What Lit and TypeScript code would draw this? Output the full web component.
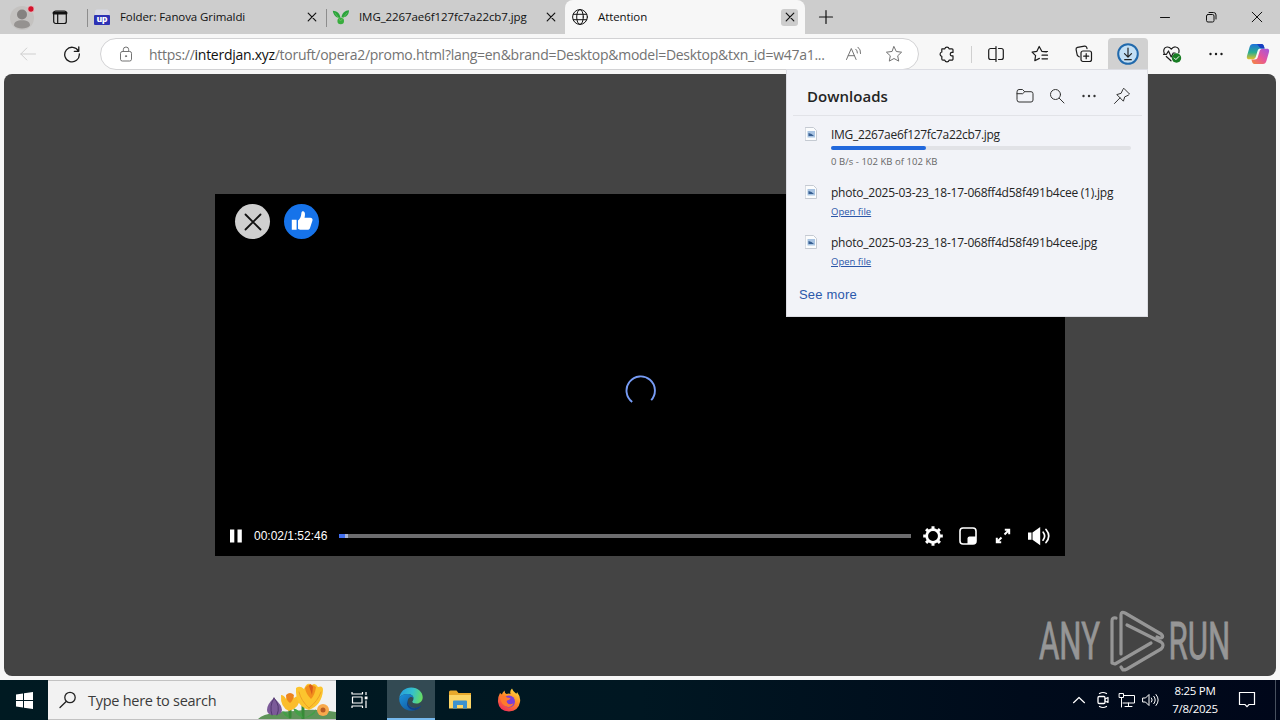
import { LitElement, html, svg, css, nothing } from 'lit';
import type { SVGTemplateResult } from 'lit';
import { customElement, property } from 'lit/decorators.js';
import { classMap } from 'lit/directives/class-map.js';

/** Wraps drawing content in an svg of the given size. */
const icon = (w: number, h: number, body: SVGTemplateResult) => html`
  <svg width=${w} height=${h} viewBox="0 0 ${w} ${h}" fill="none" stroke="currentColor"
    stroke-linecap="round" stroke-linejoin="round">${body}</svg>`;

const icons = {
  profile: icon(26, 26, svg`
    <circle cx="13" cy="14" r="12" fill="#c4c2c0" stroke="none"/>
    <circle cx="13" cy="10.5" r="5" fill="#858280" stroke="none"/>
    <path d="M5 21.5c0-3.6 3-5.2 8-5.2s8 1.6 8 5.2c-1.8 2.3-4.7 3-8 3s-6.2-.7-8-3z" fill="#959290" stroke="none"/>
    <circle cx="22" cy="5" r="3.3" fill="#d3122b" stroke="#e9d5d6" stroke-width=".8"/>`),
  workspaces: icon(16, 16, svg`
    <rect x="1.7" y="2" width="12.6" height="12.5" rx="2" stroke-width="1.2"/>
    <path d="M2 4h12" stroke-width="3"/><path d="M5.7 5v9" stroke-width="1.2"/>`),
  close: icon(10, 10, svg`<path d="M1.2 1.2l7.6 7.6M8.8 1.2L1.2 8.8" stroke-width="1.2"/>`),
  plus: icon(16, 16, svg`<path d="M8 1.5v13M1.5 8h13" stroke-width="1.2"/>`),
  minimize: icon(12, 12, svg`<path d="M1.5 6.5h9"/>`),
  restore: icon(12, 12, svg`
    <rect x="1.5" y="3.5" width="7.5" height="7.5" rx="1.5"/>
    <path d="M4 1.5h4.5a2.5 2.5 0 0 1 2.5 2.5V8"/>`),
  windowClose: icon(12, 12, svg`<path d="M1.2 1.2l9.6 9.6M10.8 1.2l-9.6 9.6"/>`),
  globe: icon(18, 18, svg`
    <circle cx="9" cy="9" r="7.4"/><ellipse cx="9" cy="9" rx="3.3" ry="7.4"/>
    <path d="M2.4 6.3h13.2M2.4 11.7h13.2"/>`),
  upload: icon(18, 18, svg`
    <path d="M2 3.5q0-2 2-2h10.5l2 2V8H2z" fill="#d8d9e4" stroke="none"/>
    <rect x="1" y="7" width="16" height="10" rx="1" fill="#2d32b4" stroke="none"/>
    <text x="9" y="14" text-anchor="middle" font-family="Roboto" font-weight="900" font-size="9.5" fill="#fff" stroke="none">up</text>`),
  sprout: icon(18, 18, svg`
    <path d="M8.500 10C8 5 4.500 3 .8 2.800 1.500 7.500 4 10 8.500 10zM9.500 9.500C10 5 13 2.500 17 2.300 17 7 14 9.700 9.500 9.500z" fill="#2aa23c" stroke="none"/>
    <circle cx="8.7" cy="13" r="3.3" fill="#39ad3e" stroke="none"/><path d="M3 5l5.500 8L15 5" stroke="#65c75a" stroke-width=".8"/>`),
  back: icon(18, 16, svg`<path d="M16.500 8H1.800M7.800 2L1.800 8l6 6"/>`),
  reload: icon(18, 18, svg`<path d="M15.500 6.200A7.300 7.300 0 1 0 16.300 9M15.800 1.800v4.500h-4.500" stroke-width="1.3"/>`),
  lock: icon(14, 16, svg`
    <rect x="1.5" y="5.5" width="11" height="9.5" rx="1.8"/>
    <path d="M4.300 5.500V3.700a2.700 2.700 0 0 1 5.400 0v1.800"/><circle cx="7" cy="10.2" r=".6" fill="currentColor"/>`),
  readAloud: icon(18, 16, svg`
    <path d="M1.500 13.500L6.300 2.500l4.800 11M3.200 9.700h6.200M10.800 3.200q1.700 1.300 1.600 3.800M13 1.200q3 2.200 2.600 6.300"/>`),
  star: icon(18, 18, svg`<path d="M9 1.700l2.300 4.800 5.300.7-3.900 3.600 1 5.300L9 13.500l-4.700 2.600 1-5.300L1.400 7.200l5.300-.7z"/>`),
  puzzle: icon(18, 18, svg`
    <path d="M4 3.800h2.800a2.200 2.200 0 0 1 4.300 0H14a1 1 0 0 1 1 1v2.600h-1.400a1.800 1.800 0 0 0 0 3.500H15V14a1.200 1.200 0 0 1-1.200 1.200h-2.700a2.200 2.200 0 0 1-4.300 0H5a1.200 1.200 0 0 1-1.200-1.200v-2.700a2.200 2.200 0 0 1 0-4.300V4z" stroke-width="1.2"/>`),
  split: icon(18, 18, svg`
    <path d="M6.500 3.500H3.700a2 2 0 0 0-2 2v7a2 2 0 0 0 2 2h2.800M11.500 3.500h2.800a2 2 0 0 1 2 2v7a2 2 0 0 1-2 2h-2.800M9 1.500v15M6.500 3.500H9M6.500 14.500H9" stroke-width="1.2"/>`),
  favorites: icon(18, 18, svg`
    <path d="M15.500 6.800l-4.700-.5L8.200 1.500 5.900 6.300l-4.800.8 3.500 3.600-.8 5 4.600-2.300M11.300 6.500h5.200M11 10.200h5.500M11 13.800h5.500" stroke-width="1.2"/>`),
  collections: icon(18, 18, svg`
    <rect x="6" y="6" width="10.5" height="10.5" rx="2" stroke-width="1.2"/><path d="M11.200 8.700v5M8.700 11.200h5" stroke-width="1.2"/>
    <path d="M4.200 11.800L3 11a2 2 0 0 1-.8-1L1.100 4.700A2 2 0 0 1 2.500 2.400l7-1.300a2 2 0 0 1 2.200 1.300l.3 1.300" stroke-width="1.2"/>`),
  download: icon(24, 24, svg`
    <circle cx="12" cy="12" r="9.8" fill="#c3dff4" stroke="#2069ac" stroke-width="2"/>
    <path d="M12 6v9M8.500 11.700L12 15.200l3.500-3.500M8.700 17.700h6.600" stroke="#222" stroke-width="1.2"/>`),
  health: icon(20, 18, svg`
    <path d="M2.200 8.300C1 5.500 2 2.300 5 2c2-.2 3.400 1 4.300 2.200C10.200 3 12 1.700 13.700 2c3 .4 3.900 3.300 3.100 5.700M1.500 9.300h3L6.500 6l2.700 6 2-4h2M4.300 11.500l4.700 4.300" stroke-width="1.2"/>
    <circle cx="14.5" cy="13" r="4.7" fill="#187d24" stroke="none"/><path d="M12.300 13l1.600 1.600 2.900-3" stroke="#fff"/>`),
  more: icon(16, 4, svg`<g fill="currentColor" stroke="none"><circle cx="2.5" cy="2" r="1.2"/><circle cx="8" cy="2" r="1.2"/><circle cx="13.5" cy="2" r="1.2"/></g>`),
  copilot: icon(24, 22, svg`
    <defs>
      <linearGradient id="a" x1="0" y1="0" x2="0" y2="1"><stop stop-color="#1d71dc"/><stop offset=".55" stop-color="#29ad90"/><stop offset="1" stop-color="#e3c12b"/></linearGradient>
      <linearGradient id="b" x1="1" y1="0" x2="0" y2="1"><stop stop-color="#a056e0"/><stop offset=".5" stop-color="#e6549b"/><stop offset="1" stop-color="#f58a3b"/></linearGradient>
    </defs>
    <g stroke="none">
      <path d="M7 1h8.500c1.600 0 2 1 2.500 2.500l.6 2h-4c-2 0-2.700 1.300-3.200 3l-1.500 5c-.6 1.700-1.500 2.700-3.300 2.700H3c-2.300 0-2.500-2-1.800-4L3.600 4C4.200 2.200 5.200 1 7 1z" fill="url(#a)"/>
      <path d="M17 21H8.500c-1.600 0-2-1-2.500-2.500l-.6-2h3.400c2 0 2.700-1.300 3.200-3l1.500-5c.6-1.700 1.500-2.700 3.300-2.700H21c2.300 0 2.500 2 1.800 4L20.400 18c-.6 1.800-1.600 3-3.400 3z" fill="url(#b)"/>
      <path d="M11 1h4.500c1.600 0 2 1 2.500 2.500l.6 2h-4z" fill="#173fc2"/>
    </g>`),
  folder: icon(18, 16, svg`
    <path d="M1 3.500a2 2 0 0 1 2-2h3.500l2.200 2.200H15a2 2 0 0 1 2 2V12a2 2 0 0 1-2 2H3a2 2 0 0 1-2-2zM1 5.700h5.700l2-2"/>`),
  search: icon(16, 16, svg`<circle cx="6.5" cy="6.5" r="5"/><path d="M10.300 10.300l4.700 4.700"/>`),
  pin: icon(18, 18, svg`
    <path d="M11 1.500l5.500 5.500-1.200 1.200-3.600 1.700-1.300 4.300-6.600-6.600 4.300-1.300L9.800 2.700zM7 10.900l-5.500 5.600"/>`),
  image: icon(12, 14, svg`
    <path d="M.5 .5h8l3 3v10H.5z" fill="#fbfcfd" stroke="#c5cad2"/>
    <rect x="2.5" y="4" width="7.5" height="6.5" fill="#a8c3e2" stroke="none"/><path d="M3.500 6l3 1L9 9H3.500z" fill="#365e91" stroke="none"/>`),
  bigClose: icon(18, 18, svg`<path d="M1.500 1.500l15 15M16.500 1.500l-15 15" stroke-width="1.8"/>`),
  thumb: icon(22, 22, svg`
    <path d="M.8 8.800h4.800v10H.8zM7 9.500c2-1.800 3-3.500 3.300-6.800.1-2 1-2.500 1.900-2.400 1.800.3 2.300 3 1.300 6.400h5.700c2 0 2.800 1.600 2.200 3l-2.300 7c-.5 1.500-1.200 2.100-2.700 2.100H10c-1.200 0-2-.3-3-1z" fill="#fff" stroke="none"/>`),
  spinner: icon(32, 32, svg`<path d="M7.200 27A14.200 14.200 0 1 1 26.200 25.200" stroke="#779cf5" stroke-width="1.9" stroke-linecap="butt"/>`),
  pause: icon(12, 14, svg`<path d="M0 .5h4.300v13H0zM7.500 .5h4.300v13H7.500z" fill="#fff" stroke="none"/>`),
  gear: icon(22, 22, svg`
    <circle cx="11" cy="11" r="6.3" stroke-width="2.7"/>
    <path d="M11 1.200v3M11 17.800v3M1.200 11h3M17.800 11h3M4.100 4.100l2 2M15.900 15.900l2 2M17.900 4.100l-2 2M6.100 15.900l-2 2" stroke-width="3" stroke-linecap="butt"/>`),
  pip: icon(18, 18, svg`
    <rect x="1" y="1" width="16" height="16" rx="3" stroke-width="1.6"/><path d="M8.500 17v-5.500a2 2 0 0 1 2-2H17V15l-2 2z" fill="#fff" stroke="none"/>`),
  expand: icon(16, 16, svg`
    <path d="M9.800 1.800h4.400v4.400M14 2L9.500 6.500M1.800 9.800v4.400h4.400M2 14l4.500-4.500" stroke-width="2" stroke-linecap="butt" stroke-linejoin="miter"/>`),
  volume: icon(24, 20, svg`
    <path d="M1 6.500h3.500v7.300H1zM5.500 6.500L13.200 1v18.200L5.500 13.800z" fill="#fff" stroke="none"/>
    <path d="M16.200 6.200q3 4-.2 8M19 3.500q5.500 6.500 0 13" stroke-width="1.7"/>`),
  windows: icon(17, 17, svg`<path d="M0 2.500l7-1V8H0zM8 1.300L17 0v8H8zM0 9h7v6.500l-7-1zM8 9h9v8l-9-1.300z" fill="#fff" stroke="none"/>`),
  taskSearch: icon(18, 18, svg`<circle cx="11" cy="6.5" r="5.2" stroke-width="1.3"/><path d="M7.200 10.500L1 16.500" stroke-width="1.3"/>`),
  flowers: icon(78, 38, svg`
    <g stroke="none">
      <path d="M0 38q5-5 17-6 10-2 20-2 20-3 41 1v7z" fill="#5e9459"/>
      <path d="M45 38V25M32 36V24" stroke="#378b38" stroke-width="3"/>
      <path d="M45 37q-8-3-10-10 8 2 10 10zM46 37q8-3 12-9-1 8-12 9zM31 37q-5-2-7-7 6 1 7 7z" fill="#43a047"/>
      <path d="M16 17q-7 6-7 12 0 5 7 5 8 0 8-5 0-5-8-12z" fill="#7c5a99"/><path d="M16 17q-5 8-2 17M16 17q7 8 3 17" stroke="#52386f" fill="none"/>
      <path d="M23 14q3 0 5 4 1-5 4-5 3 1 4 4 3-3 6-1 0 11-11 14-9-4-8-16z" fill="#fbbd2b"/>
      <path d="M28 14q4-4 8 0-1 6-4 8-4-3-4-8z" fill="#ed831d"/>
      <g transform="translate(-2)">
        <path d="M40 7q4-3 8 1 3-8 8-4 3-3 6 2 5-2 5 3-1 15-14 20-14-4-13-22z" fill="#fcc42e"/>
        <path d="M49 7q4-6 11-1-1 8-5 12-5-5-6-11z" fill="#f28e1c"/><path d="M53 5q1-4 4 1l-1 8z" fill="#d95d1b"/>
        <path d="M43 11q2 9 10 16M65 11q-3 9-12 16" stroke="#eea025" fill="none"/>
      </g>
      <circle cx="65" cy="29" r="6" fill="#f8a94c"/><circle cx="65" cy="29" r="2.5" fill="#b75c24"/>
    </g>`),
  taskView: icon(18, 18, svg`
    <path d="M1 1v2h10.500V1M1 17v-2h10.500v2M1.500 6h9.500v6H1.500zM15 1v3M15 9.500V17" stroke="#fff" stroke-width="1.2" stroke-linecap="butt"/><path d="M13.700 5.500h2.800v2.800h-2.800z" fill="#fff" stroke="none"/>`),
  edge: icon(24, 24, svg`
    <defs>
      <linearGradient id="e1" x1="0" x2="1" y1=".3" y2=".5"><stop stop-color="#249de0"/><stop offset=".55" stop-color="#35c1cb"/><stop offset="1" stop-color="#66dc62"/></linearGradient>
      <linearGradient id="e2" x1="0" x2="1" y2="1"><stop stop-color="#1a92dd"/><stop offset="1" stop-color="#114a8b"/></linearGradient>
    </defs>
    <g stroke="none">
      <path d="M.3 11C1 4.500 6 .4 12.200 .4 19 .4 23.700 5 23.700 10.200c0 4-3 6.300-6.400 6.300-2.700 0-4-.9-4-1.700 0-.6 1.200-1.200 1.200-3.300C14.500 8.700 12 7 8.800 7 4.800 7 1.500 8.500.3 11z" fill="url(#e1)"/>
      <path d="M.3 11C1.500 8.500 4.800 7 8.800 7c3.200 0 5.700 1.700 5.700 4.500-1-1.500-2.600-1.800-3.500-1.300-2 1-2.500 3-2.300 5.300.4 3.500 4.300 6.200 8.800 5.300 1.600-.3 3-1 4.500-2-2 3.200-5.600 5-9.800 5C5.200 23.800-.3 18 .3 11z" fill="url(#e2)"/>
      <path d="M8.800 13.500c-.9 5 4 8.800 8.700 7.300 1.600-.3 3-1 4.500-2-.7 1.500-2.500 3.200-4.500 4C11 24 6 19 8.800 13.500z" fill="#123f85"/>
    </g>`),
  explorer: icon(22, 20, svg`
    <g stroke="none">
      <path d="M0 2q0-1.500 1.500-1.500h6L9.500 3H22v15H0z" fill="#e8a92c"/><path d="M0 5h22v13.500H0z" fill="#fcd566"/>
      <path d="M4 18.500v-7q0-1 1-1h12q1 0 1 1v7h-4V15H8v3.500z" fill="#3c92cf"/>
    </g>`),
  firefox: icon(24, 24, svg`
    <defs><linearGradient id="f" x1=".8" y1="0" x2=".2" y2="1"><stop stop-color="#ffdf3e"/><stop offset=".45" stop-color="#ff8a27"/><stop offset="1" stop-color="#f0285c"/></linearGradient></defs>
    <g stroke="none">
      <path d="M3 5l2 1.500q.5-2 2.500-4 0 2.500 2 3.500Q12 5 13.500 6 12.500 3 15 .5q1 3 4 5Q20 6 20 4q4 5 3 10-1.500 9-11 9.500Q2 23 1 14 .7 9 3 5z" fill="url(#f)"/>
      <circle cx="12" cy="13.5" r="6" fill="#7a3fd8"/>
      <path d="M3 9q4-3 7 .5l3.500.5q-.5 2-3.500 2.500-1 2 1.500 3.500 3 1 5-1-1 4-5.500 4Q4 18 3 9z" fill="#ff7a2d"/>
    </g>`),
  chevron: icon(14, 8, svg`<path d="M1.500 6.700L7 1.500l5.500 5.200" stroke-width="1.2"/>`),
  meet: icon(12, 18, svg`
    <rect x="1" y="5.5" width="7" height="7" rx="1.2" stroke-width="1.3"/><path d="M8 8l3-1.500v5L8 10M2.500 2.500q3.500-2 7 0M2.500 15.500q3.500 2 7 0" stroke-width="1.2"/>`),
  network: icon(18, 16, svg`
    <path d="M6 3.500h10.500v7.500H5M10.500 11v3M7 14.500h7M1.500 1.500h4v4h-4zM3.500 5.500V15" stroke-linejoin="miter"/>`),
  sound: icon(18, 14, svg`
    <path d="M1 5h2.500L7 1.500v11L3.500 9H1zM9.500 5q1.500 2 0 4M11.800 3.300q3 3.700 0 7.400M14 1.500q4.500 5.500 0 11"/>`),
  notify: icon(18, 18, svg`<path d="M1.500 1.500h15v12H11L9 15.700 7 13.500H1.500z" stroke-width="1.2" stroke-linejoin="miter"/>`),
};

interface Tab {
  title: string;
  icon: unknown;
  active?: boolean;
}

interface Download {
  name: string;
  status?: string;
  progress?: number;
}

const TABS: Tab[] = [
  { title: 'Folder: Fanova Grimaldi', icon: icons.upload },
  { title: 'IMG_2267ae6f127fc7a22cb7.jpg', icon: icons.sprout },
  { title: 'Attention', icon: icons.globe, active: true },
];

const DOWNLOADS: Download[] = [
  { name: 'IMG_2267ae6f127fc7a22cb7.jpg', status: '0 B/s - 102 KB of 102 KB', progress: 31.7 },
  { name: 'photo_2025-03-23_18-17-068ff4d58f491b4cee (1).jpg' },
  { name: 'photo_2025-03-23_18-17-068ff4d58f491b4cee.jpg' },
];

/** Tab strip with the window buttons. */
@customElement('tab-strip')
export class TabStrip extends LitElement {
  @property({ attribute: false }) tabs: Tab[] = [];

  static styles = css`
    :host {
      display: flex;
      height: 34px;
      background: #cdcdcd;
      color: #111;
    }
    svg { display: block; flex: none; }
    .slot { display: flex; align-items: center; justify-content: center; }
    .profile { width: 44px; }
    .spaces { width: 32px; margin-right: 11px; }
    .tab {
      display: flex;
      align-items: center;
      width: 239px;
      box-sizing: border-box;
      padding: 0 6px;
      background: linear-gradient(#8d8d8d, #8d8d8d) 0 9px / 1px 18px no-repeat;
      font-size: 11.5px;
      letter-spacing: -0.09px;
      white-space: nowrap;
    }
    .tab.active {
      width: 240px;
      padding-right: 7px;
      border-radius: 8px 8px 0 0;
      background: #f7f7f7;
    }
    .title { flex: 1; margin-left: 9px; padding-bottom: 2px; }
    .close {
      display: flex;
      align-items: center;
      justify-content: center;
      width: 17px;
      height: 17px;
      border-radius: 3px;
    }
    .active .close { background: #cdcdcd; }
    .new { width: 42px; }
    .window { display: flex; margin-left: auto; }
    .window .slot { width: 46px; }
  `;

  render() {
    return html`
      <div class="slot profile">${icons.profile}</div>
      <div class="slot spaces">${icons.workspaces}</div>
      ${this.tabs.map((tab) => html`
        <div class=${classMap({ tab: true, active: !!tab.active })}>
          ${tab.icon}
          <span class="title">${tab.title}</span>
          <span class="close">${icons.close}</span>
        </div>
      `)}
      <div class="slot new">${icons.plus}</div>
      <div class="window">
        <div class="slot">${icons.minimize}</div>
        <div class="slot">${icons.restore}</div>
        <div class="slot">${icons.windowClose}</div>
      </div>
    `;
  }
}

/** Navigation buttons, address field and browser actions. */
@customElement('browser-toolbar')
export class BrowserToolbar extends LitElement {
  static styles = css`
    :host {
      display: flex;
      align-items: center;
      height: 40px;
      background: #f7f7f7;
      color: #1b1b1b;
    }
    svg { display: block; flex: none; }
    .slot { display: flex; flex: none; align-items: center; justify-content: center; width: 44px; }
    .back { width: 56px; color: #cfcfcf; }
    .reload { width: 32px; margin-right: 12px; }
    .address {
      display: flex;
      flex: none;
      align-items: center;
      box-sizing: border-box;
      width: 819px;
      height: 32px;
      padding: 0 15px 0 18px;
      border: 1px solid #d2d2d4;
      border-radius: 16px;
      background: #fff;
      color: #737373;
    }
    .url {
      flex: 1;
      margin-left: 16px;
      font-size: 14px;
      letter-spacing: -0.275px;
      white-space: nowrap;
    }
    .url b { color: #111; font-weight: 400; }
    .star { margin-left: 22px; }
    .puzzle { width: 52px; margin-left: 2px; }
    .divider { flex: none; width: 1px; height: 17px; margin-left: -2px; background: #d0d0d0; }
    .split { width: 47px; }
    .favorites { width: 42px; }
    .collections { width: 46px; }
    .downloads {
      width: 40px;
      height: 32px;
      margin: 0 2px 0 1px;
      border-radius: 4px 4px 0 0;
      background: #d1d1d1;
    }
    .copilot { width: 40px; }
  `;

  render() {
    return html`
      <div class="slot back">${icons.back}</div>
      <div class="slot reload">${icons.reload}</div>
      <div class="address">
        ${icons.lock}
        <span class="url">https://<b>interdjan.xyz</b>/toruft/opera2/promo.html?lang=en&amp;brand=Desktop&amp;model=Desktop&amp;txn_id=w47a1...</span>
        ${icons.readAloud}
        <span class="star">${icons.star}</span>
      </div>
      <div class="slot puzzle">${icons.puzzle}</div>
      <div class="divider"></div>
      <div class="slot split">${icons.split}</div>
      <div class="slot favorites">${icons.favorites}</div>
      <div class="slot collections">${icons.collections}</div>
      <div class="slot downloads">${icons.download}</div>
      <div class="slot">${icons.health}</div>
      <div class="slot">${icons.more}</div>
      <div class="slot copilot">${icons.copilot}</div>
    `;
  }
}

/** Video player that is still buffering. */
@customElement('video-player')
export class VideoPlayer extends LitElement {
  static styles = css`
    :host {
      display: flex;
      flex-direction: column;
      justify-content: space-between;
      width: 850px;
      height: 362px;
      background: #000;
      color: #fff;
    }
    svg { display: block; flex: none; }
    .top { display: flex; gap: 14px; padding: 10px 20px 0; }
    .round {
      display: flex;
      align-items: center;
      justify-content: center;
      width: 35px;
      height: 35px;
      border-radius: 50%;
      background: #cfcfcf;
      color: #111;
    }
    .like { background: #1673ea; }
    .middle { display: flex; justify-content: center; padding: 26px 0 0 2px; }
    .controls { display: flex; align-items: center; height: 40px; padding-left: 15px; }
    .time {
      width: 85px;
      margin-left: 12px;
      font: 12px 'Liberation Sans', Arial, sans-serif;
    }
    .track { width: 572px; height: 4px; margin-right: 4px; background: #6c6c6e; }
    .buffered { width: 9px; height: 4px; background: #a9b3d2; }
    .played { width: 6px; height: 4px; background: #426ff0; }
    .btn { display: flex; align-items: center; justify-content: center; width: 35px; }
    .sound { width: 37px; }
  `;

  render() {
    return html`
      <div class="top">
        <div class="round">${icons.bigClose}</div>
        <div class="round like">${icons.thumb}</div>
      </div>
      <div class="middle">${icons.spinner}</div>
      <div class="controls">
        ${icons.pause}
        <span class="time">00:02/1:52:46</span>
        <div class="track"><div class="buffered"><div class="played"></div></div></div>
        <div class="btn">${icons.gear}</div>
        <div class="btn">${icons.pip}</div>
        <div class="btn">${icons.expand}</div>
        <div class="btn sound">${icons.volume}</div>
      </div>
    `;
  }
}

/** Flyout that lists recent downloads. */
@customElement('downloads-panel')
export class DownloadsPanel extends LitElement {
  @property({ attribute: false }) items: Download[] = [];

  static styles = css`
    :host {
      display: block;
      box-sizing: border-box;
      border: 1px solid #dcdde3;
      background: #f2f3f8;
      color: #242424;
    }
    svg { display: block; flex: none; }
    .head {
      display: flex;
      align-items: center;
      height: 46px;
      box-sizing: border-box;
      margin: 0 5px 0 6px;
      padding: 6px 4px 0 14px;
      border-bottom: 1px solid #e2e3e8;
    }
    h1 { flex: 1; margin: 0; font-size: 15px; font-weight: 600; letter-spacing: 0.03px; }
    .action { display: flex; align-items: center; justify-content: center; width: 32px; color: #333; }
    .action:last-child { width: 33px; }
    .item { display: flex; height: 50px; padding: 0 16px 0 18px; }
    .item.loading { height: 58px; }
    .list { padding-top: 9px; }
    .file { margin-top: 2px; }
    .body { flex: 1; margin-left: 14px; white-space: nowrap; }
    .name { height: 20px; font-size: 12px; line-height: 20px; letter-spacing: -0.23px; }
    .loading .name { height: 19px; letter-spacing: -0.31px; }
    .bar { height: 4px; margin: 2px 0 4px; border-radius: 2px; background: #e1e2e6; }
    .fill { height: 4px; border-radius: 2px; background: #2168dc; }
    .status { font-size: 9.5px; line-height: 16px; letter-spacing: 0.05px; color: #666; }
    .open {
      display: block;
      margin-top: 1px;
      font-size: 9.5px;
      line-height: 16px;
      color: #2b56a8;
      text-decoration: underline;
    }
    .more {
      margin: 2px 0 0 12px;
      font: 13px/20px 'Liberation Sans', Arial, sans-serif;
      letter-spacing: 0.2px;
      color: #2b58ab;
    }
  `;

  renderItem(item: Download) {
    const loading = item.progress !== undefined;
    return html`
      <div class=${classMap({ item: true, loading })}>
        <div class="file">${icons.image}</div>
        <div class="body">
          <div class="name">${item.name}</div>
          ${loading
            ? html`<div class="bar"><div class="fill" style="width: ${item.progress}%"></div></div>`
            : nothing}
          ${item.status
            ? html`<div class="status">${item.status}</div>`
            : html`<a class="open">Open file</a>`}
        </div>
      </div>
    `;
  }

  render() {
    return html`
      <div class="head">
        <h1>Downloads</h1>
        <div class="action">${icons.folder}</div>
        <div class="action">${icons.search}</div>
        <div class="action">${icons.more}</div>
        <div class="action">${icons.pin}</div>
      </div>
      <div class="list">${this.items.map((item) => this.renderItem(item))}</div>
      <div class="more">See more</div>
    `;
  }
}

/** Desktop taskbar. */
@customElement('task-bar')
export class TaskBar extends LitElement {
  static styles = css`
    :host {
      display: flex;
      height: 40px;
      background: linear-gradient(90deg, #001a22, #001722 50%, #000b1b 80%, #00071a);
      color: #fff;
    }
    svg { display: block; flex: none; }
    .slot { display: flex; align-items: center; justify-content: center; width: 24px; }
    .app { width: 48px; box-sizing: border-box; }
    .app.view { margin-right: 3px; }
    .app.active { background: #334a53; border-bottom: 2px solid #76b9ed; }
    .app.files { width: 50px; }
    .search {
      display: flex;
      align-items: center;
      box-sizing: border-box;
      width: 288px;
      padding-left: 11px;
      border: 1px solid #c2c2c2;
      border-left: 0;
      border-right: 0;
      background: #f2f2f2;
      color: #222;
      font-size: 14.5px;
      letter-spacing: -0.27px;
      white-space: nowrap;
    }
    .search span { flex: 1; margin-left: 11px; color: #3b3b3b; }
    .tray { display: flex; margin-left: auto; }
    .clock {
      display: flex;
      flex-direction: column;
      justify-content: center;
      width: 64px;
      font-size: 11.5px;
      line-height: 18px;
      letter-spacing: -0.3px;
      text-align: center;
      white-space: nowrap;
    }
    .notify { width: 40px; }
    .desktop { width: 4px; margin-left: 8px; border-left: 1px solid #47505e; }
  `;

  render() {
    return html`
      <div class="slot app">${icons.windows}</div>
      <div class="search">${icons.taskSearch}<span>Type here to search</span>${icons.flowers}</div>
      <div class="slot app view">${icons.taskView}</div>
      <div class="slot app active">${icons.edge}</div>
      <div class="slot app files">${icons.explorer}</div>
      <div class="slot app">${icons.firefox}</div>
      <div class="tray">
        <div class="slot">${icons.chevron}</div>
        <div class="slot">${icons.meet}</div>
        <div class="slot">${icons.network}</div>
        <div class="slot">${icons.sound}</div>
        <div class="clock"><span>8:25 PM</span><span>7/8/2025</span></div>
        <div class="slot notify">${icons.notify}</div>
        <div class="desktop"></div>
      </div>
    `;
  }
}

@customElement('app-root')
export class AppRoot extends LitElement {
  static styles = css`
    :host {
      display: flex;
      flex-direction: column;
      position: relative;
      width: 1280px;
      height: 720px;
      overflow: hidden;
      background: #f7f7f7;
      font-family: 'Open Sans', 'Noto Sans', sans-serif;
    }
    .page {
      display: flex;
      align-items: center;
      justify-content: center;
      flex: 1;
      margin: 0 4px 4px;
      border-radius: 8px;
      background: #444;
    }
    .flyout {
      position: absolute;
      left: 786px;
      top: 69px;
      width: 362px;
      height: 248px;
    }
    .watermark {
      position: absolute;
      left: 1034px;
      top: 606px;
      opacity: 0.85;
    }
  `;

  render() {
    return html`
      <tab-strip .tabs=${TABS}></tab-strip>
      <browser-toolbar></browser-toolbar>
      <div class="page"><video-player></video-player></div>
      <task-bar></task-bar>
      <downloads-panel class="flyout" .items=${DOWNLOADS}></downloads-panel>
      <svg class="watermark" width="204" height="70" viewBox="0 0 204 70" fill="none">
        <g fill="#a5a5a5" stroke="#a5a5a5" stroke-width=".8" font-family="Roboto, sans-serif" font-size="52">
          <text transform="translate(5 53) scale(.6 1)">ANY</text>
          <text transform="translate(134.500 53) scale(.6 1)">RUN</text>
        </g>
        <g stroke="#a5a5a5" stroke-width="3.2" stroke-linejoin="round" stroke-linecap="round">
          <path d="M82 12q-4-1-4 3v42l3 1 36-21"/>
          <path d="M87 48V9q0-4 4-2l36 21q4 4-2 4l-2-1"/>
          <path d="M87 61l2 3q2 0 4-1l34-20q4-4 0-7L93 19"/>
        </g>
      </svg>
    `;
  }
}
